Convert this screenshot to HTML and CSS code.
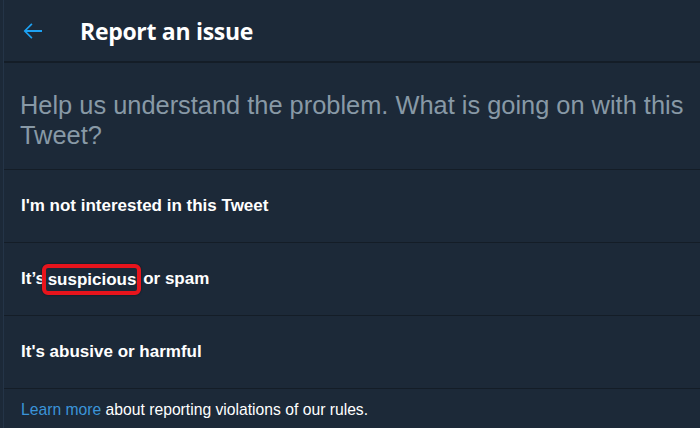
FILE: index.html
```html
<!DOCTYPE html>
<html>
<head>
<meta charset="utf-8">
<link rel="stylesheet" href="styles.css">
</head>
<body>
<div class="modal">
  <header class="head">
    <svg class="back" viewBox="0 0 24 24" width="24" height="24"><path d="M21 11.1H5.9l5.6-5.6-1.2-1.2L2.6 12l7.7 7.7 1.2-1.2-5.6-5.6H21z" fill="#1da1f2"/></svg>
    <h1 class="title">Report an issue</h1>
  </header>
  <p class="prompt">Help us understand the problem. What is going on with this Tweet?</p>
  <div class="option">I'm not interested in this Tweet</div>
  <div class="option">It’s <span class="mark">suspicious</span> or spam</div>
  <div class="option">It's abusive or harmful</div>
  <p class="foot"><a class="link">Learn more</a> about reporting violations of our rules.</p>
</div>
</body>
</html>
```
FILE: styles.css
```css
html, body { margin: 0; padding: 0; }
body { background: #1c2938; width: 700px; height: 428px; overflow: hidden; font-family: "Liberation Sans", Arial, sans-serif; }
.modal { border-left: 1px solid #243447; margin-left: 3px; height: 428px; }
.head { height: 61px; display: flex; align-items: center; border-bottom: 2px solid #141d27; }
.back { margin-left: 17px; width: 24px; height: 24px; }
.title { margin: 0 0 0 35px; color: #fff; font-family: "Open Sans", sans-serif; font-weight: 700; font-size: 23px; letter-spacing: -0.3px; }
.prompt { margin: 0; padding: 27px 6px 19px 16px; color: #8899a6; font-size: 25.4px; line-height: 30px; height: 60px; border-bottom: 1px solid #141d27; }
.option { height: 72px; display: flex; align-items: center; padding-left: 17px; color: #fff; font-weight: 700; font-size: 17px; border-bottom: 1px solid #141d27; white-space: pre; }
.mark { border: 4px solid #e8141c; border-radius: 6px; padding: 2px 1px 1px 2px; margin: 0 -3px 0 -8px; box-shadow: 0 0 2px rgba(0,0,0,0.6); }
.foot { margin: 0; padding: 12px 17px; color: #fff; font-size: 15.7px; }
.link { color: #3b94d9; }
```
